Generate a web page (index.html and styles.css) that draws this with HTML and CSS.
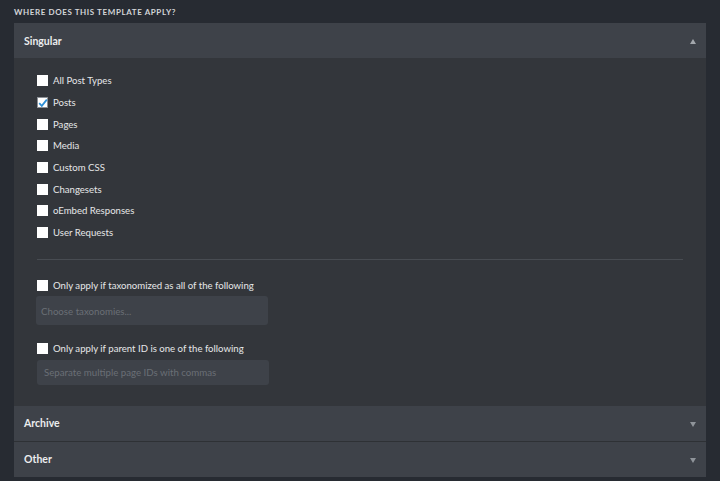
FILE: index.html
```html
<!DOCTYPE html>
<html>
<head>
<meta charset="utf-8">
<link rel="stylesheet" href="styles.css">
</head>
<body>
<div class="wrap">
  <div class="title">Where does this template apply?</div>
  <div class="panel">
    <div class="head"><span>Singular</span><span class="arrow up"></span></div>
    <div class="body">
      <div class="list">
        <label class="row"><span class="cb"></span>All Post Types</label>
        <label class="row"><span class="cb checked"><svg viewBox="0 0 12 12" width="12" height="12"><path d="M2.2 6.2 L4.8 8.8 L9.8 2.6" fill="none" stroke="#2e8fd6" stroke-width="1.8"/></svg></span>Posts</label>
        <label class="row"><span class="cb"></span>Pages</label>
        <label class="row"><span class="cb"></span>Media</label>
        <label class="row"><span class="cb"></span>Custom CSS</label>
        <label class="row"><span class="cb"></span>Changesets</label>
        <label class="row"><span class="cb"></span>oEmbed Responses</label>
        <label class="row"><span class="cb"></span>User Requests</label>
      </div>
      <div class="sep"></div>
      <label class="row cond"><span class="cb"></span>Only apply if taxonomized as all of the following</label>
      <div class="input tall">Choose taxonomies...</div>
      <label class="row cond2"><span class="cb"></span>Only apply if parent ID is one of the following</label>
      <div class="input short">Separate multiple page IDs with commas</div>
    </div>
    <div class="head"><span>Archive</span><span class="arrow down"></span></div>
    <div class="head last"><span>Other</span><span class="arrow down"></span></div>
  </div>
</div>
</body>
</html>
```
FILE: styles.css
```css
html, body {
  margin: 0;
  padding: 0;
  background: #272b32;
  font-family: Lato, "Open Sans", sans-serif;
  color: #e6e7e8;
}
.wrap {
  padding: 6px 14px 0 14px;
}
.title {
  font-size: 8px;
  font-weight: 700;
  text-transform: uppercase;
  letter-spacing: 0.6px;
  color: #d3d5d8;
  height: 17px;
  line-height: 12px;
}
.panel {
  background: #33363b;
}
.head {
  height: 35px;
  background: #3e4249;
  display: flex;
  align-items: center;
  justify-content: space-between;
  padding: 0 10px;
  font-size: 10.5px;
  font-weight: 700;
  color: #ecedee;
}
.head.last {
  border-top: 1px solid #2e3135;
}
.arrow {
  width: 0;
  height: 0;
  border-left: 3.5px solid transparent;
  border-right: 3.5px solid transparent;
  margin-right: 0;
}
.arrow.up {
  border-bottom: 5px solid #a3a7ac;
  margin-top: 1px;
}
.arrow.down {
  border-top: 5px solid #8f949a;
  margin-top: 2px;
}
.body {
  padding: 12px 23px 21px 23px;
}
.row {
  display: flex;
  align-items: center;
  height: 21.7px;
  font-size: 9.6px;
  color: #e6e7e8;
}
.cb {
  width: 11px;
  height: 11px;
  background: #ffffff;
  margin-right: 5px;
  flex: none;
  position: relative;
  box-sizing: border-box;
}
.cb.checked {
  border: 1px solid #8c9096;
}
.cb svg {
  position: absolute;
  left: -1px;
  top: -1px;
}
.sep {
  height: 1px;
  background: #484c52;
  margin-top: 15px;
}
.cond {
  margin-top: 15px;
}
.input {
  background: #3e4249;
  border-radius: 3px;
  color: #6a6f76;
  font-size: 9.7px;
  display: flex;
  align-items: center;
  box-sizing: border-box;
}
.input.tall {
  width: 232px;
  height: 29px;
  margin-left: -1px;
  padding-left: 5px;
}
.input.short {
  width: 232px;
  height: 25px;
  padding-left: 7px;
}
.cond2 {
  margin-top: 12px;
  margin-bottom: 1px;
}
```
